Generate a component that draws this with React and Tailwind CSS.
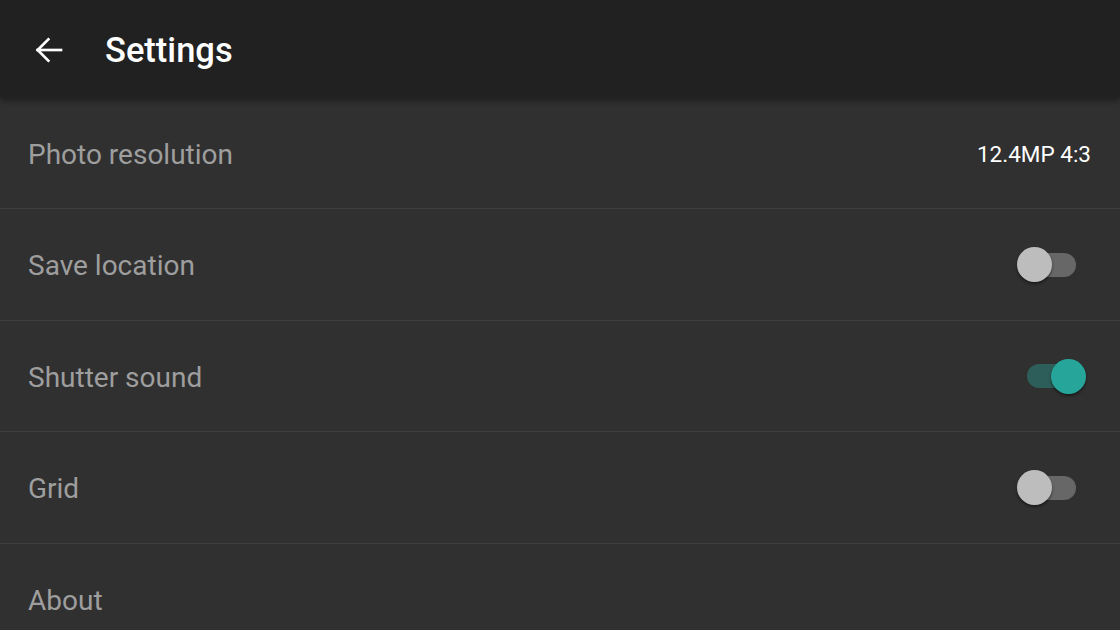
import React from 'react';

const Toggle = ({ on }) => (
  <div className="relative w-[69px] h-[35px] flex items-center">
    <div
      className={
        on
          ? 'ml-[10px] w-[49px] h-[24px] rounded-full bg-[#2d5e59]'
          : 'ml-[10px] w-[49px] h-[24px] rounded-full bg-[#676767]'
      }
    />
    <div
      className={
        on
          ? 'absolute right-0 top-0 w-[35px] h-[35px] rounded-full bg-[#26a69a] shadow-[0_2px_3px_rgba(0,0,0,0.45)]'
          : 'absolute left-0 top-0 w-[35px] h-[35px] rounded-full bg-[#bdbdbd] shadow-[0_2px_3px_rgba(0,0,0,0.45)]'
      }
    />
  </div>
);

const Row = ({ label, h, last, children }) => (
  <div
    className={
      (last ? '' : 'border-b border-[#3f3f3f] ') +
      h +
      ' flex items-center justify-between pl-[28px]'
    }
  >
    <span className="pt-[3px] text-[28px] text-[#9e9e9e]">{label}</span>
    {children}
  </div>
);

export default function App() {
  return (
    <div className="w-[1120px] h-[630px] overflow-hidden bg-[#303030] font-['Roboto',sans-serif]">
      <header className="relative z-10 h-[98px] bg-[#212121] flex items-center shadow-[0_3px_6px_rgba(0,0,0,0.35)]">
        <div className="w-[105px] flex items-center pl-[33px] pt-[2px]">
          <svg width="32" height="32" viewBox="0 0 24 24" fill="none" stroke="#ffffff" strokeWidth="2" strokeLinecap="square">
            <path d="M21 12H3.5" />
            <path d="M11.5 4 3.5 12l8 8" />
          </svg>
        </div>
        <h1 className="pt-[3px] text-[34.5px] font-medium text-white">Settings</h1>
      </header>
      <div>
        <Row label="Photo resolution" h="h-[111px]">
          <span className="pr-[29px] pt-[3px] text-[22.5px] text-white">12.4MP 4:3</span>
        </Row>
        <Row label="Save location" h="h-[112px]">
          <div className="mr-[34px]">
            <Toggle on={false} />
          </div>
        </Row>
        <Row label="Shutter sound" h="h-[111px]">
          <div className="mr-[34px]">
            <Toggle on />
          </div>
        </Row>
        <Row label="Grid" h="h-[112px]">
          <div className="mr-[34px]">
            <Toggle on={false} />
          </div>
        </Row>
        <Row label="About" h="h-[111px]" last />
      </div>
    </div>
  );
}
